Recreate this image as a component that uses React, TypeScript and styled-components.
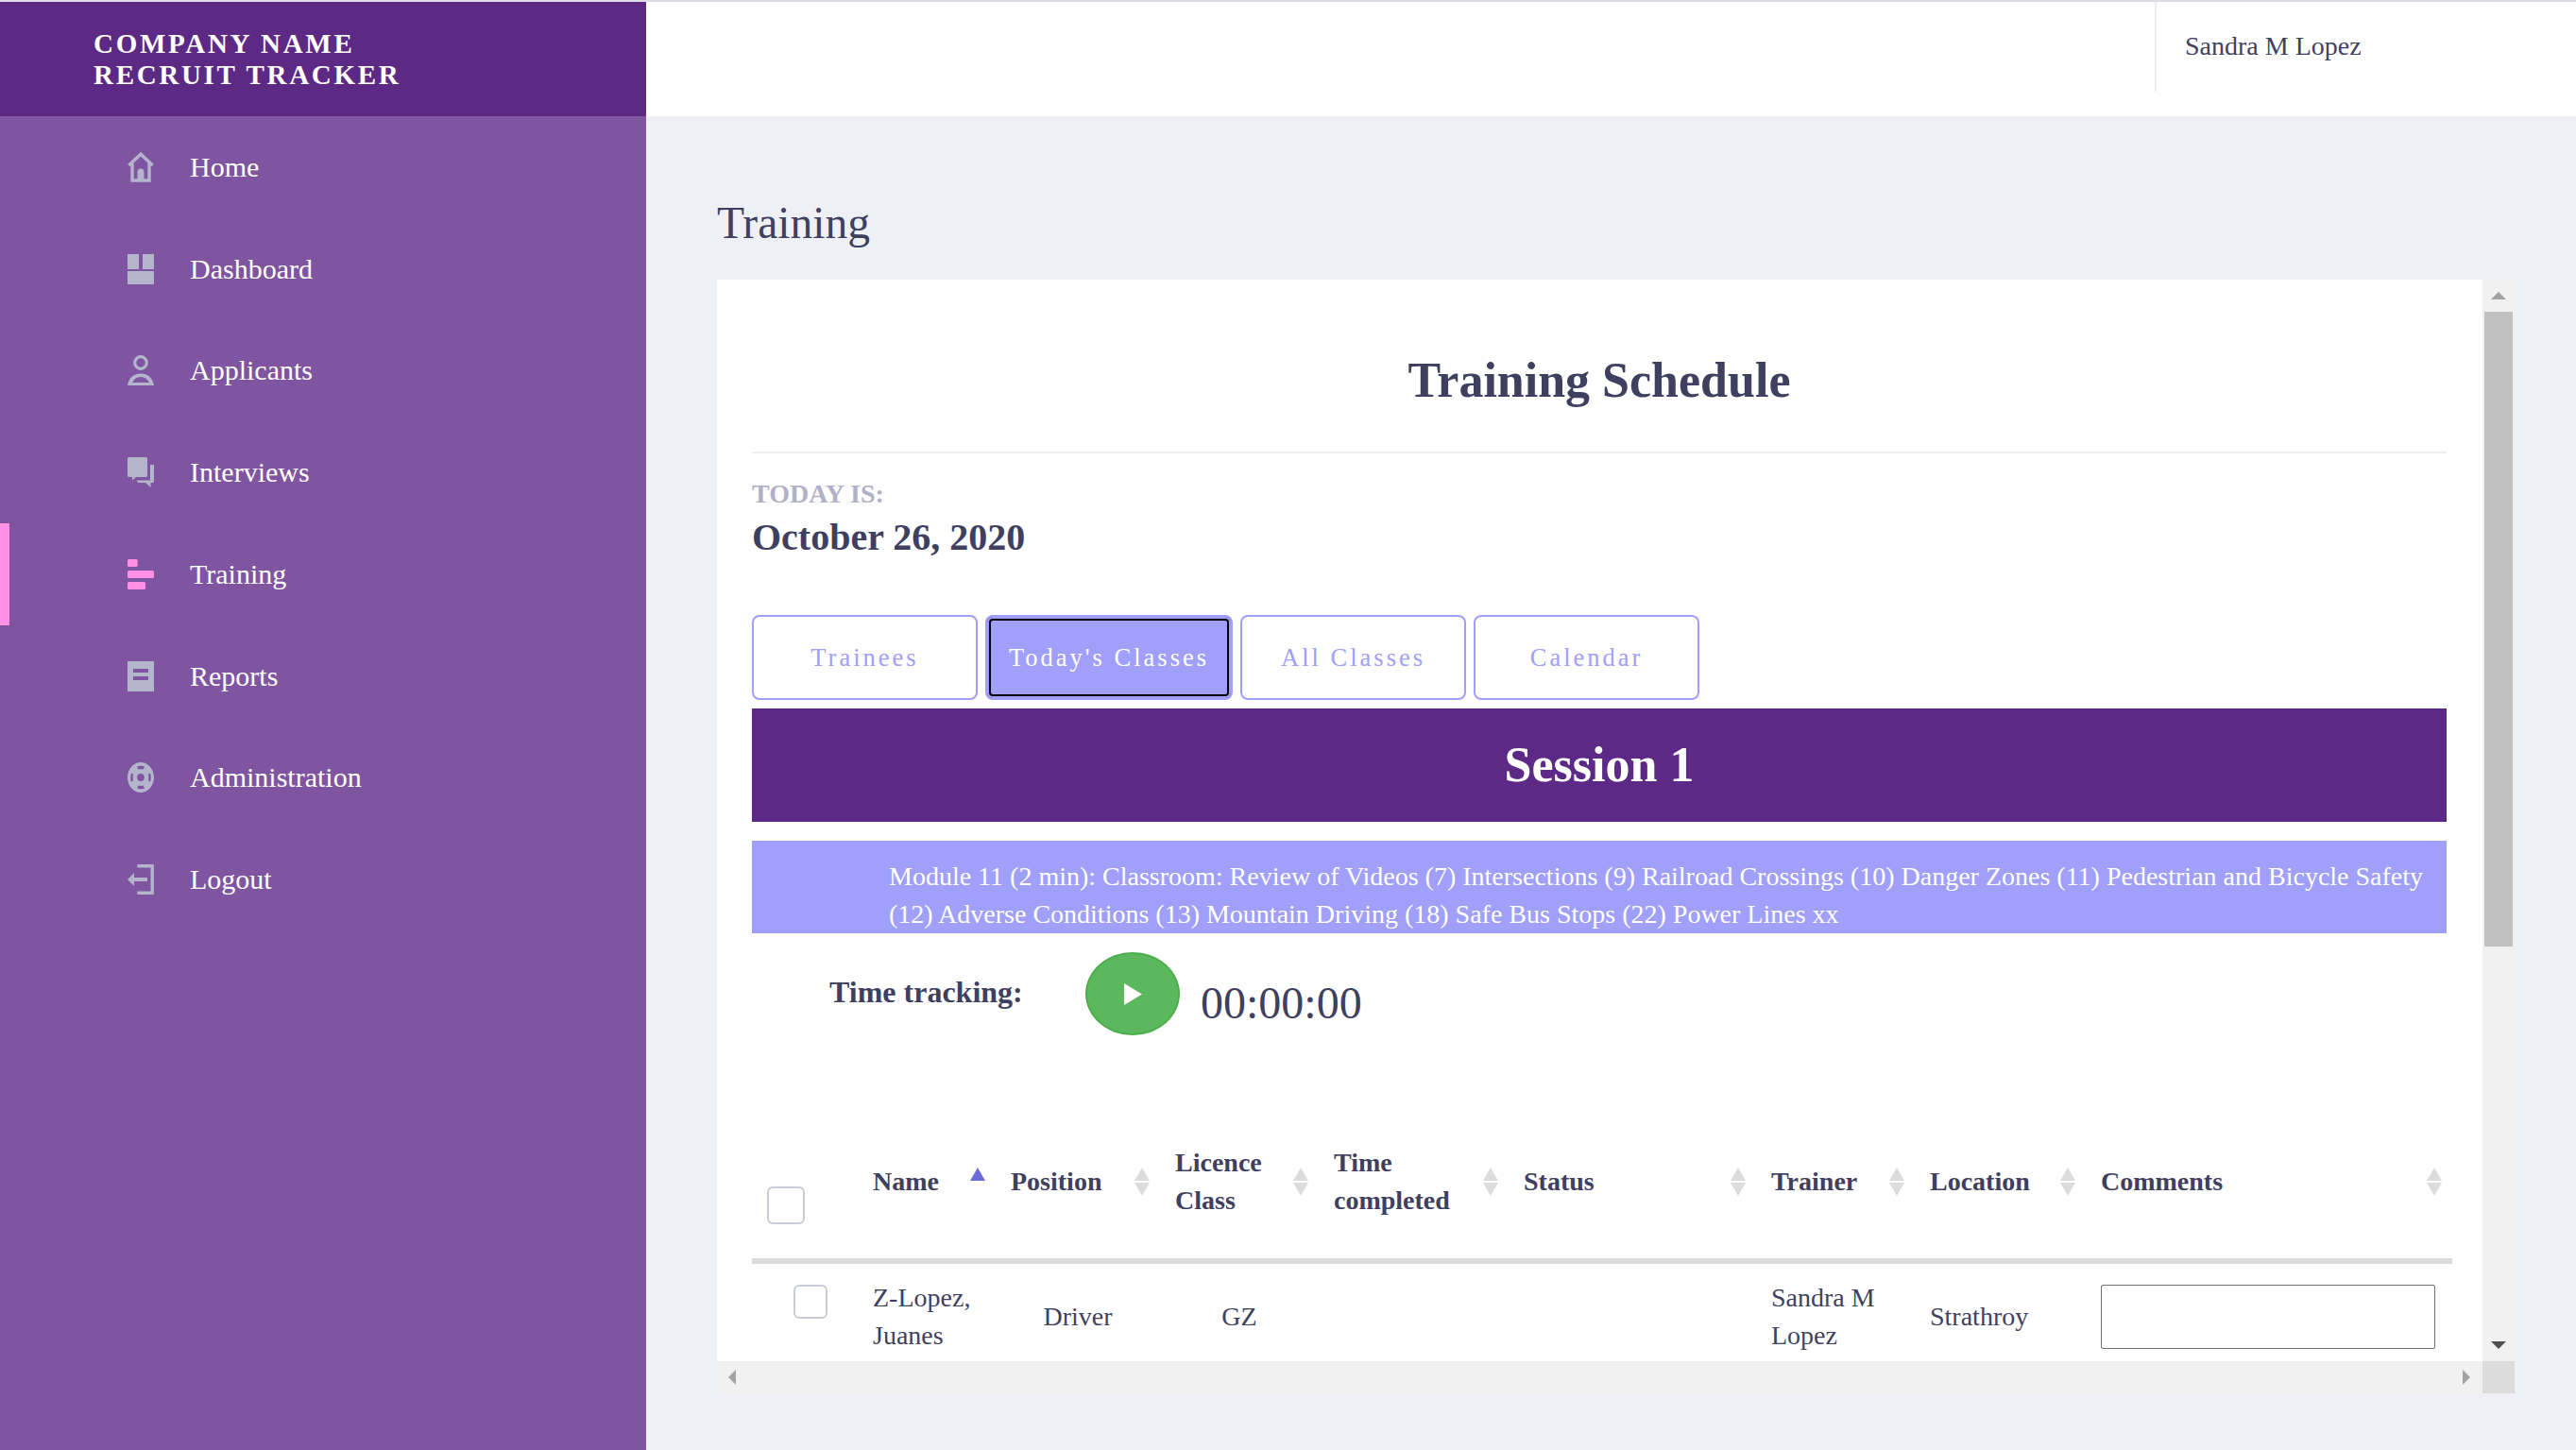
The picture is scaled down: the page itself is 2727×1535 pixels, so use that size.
import React from "react";
import styled, { createGlobalStyle } from "styled-components";

const Global = createGlobalStyle`
  html, body { margin: 0; padding: 0; height: 100%; overflow: hidden; background: #eff0f5; }
  body { font-family: "Liberation Serif", "Times New Roman", serif; color: #3f3f5f; }
  * { box-sizing: border-box; }
`;

const Shell = styled.div`
  display: grid;
  grid-template-columns: 684px 1fr;
  height: 1535px;
  border-top: 2px solid #dcdce4;
`;
const Sidebar = styled.aside`
  background: #7f54a0;
  display: flex;
  flex-direction: column;
`;
const Brand = styled.div`
  height: 121px;
  background: #5c2985;
  color: #fff;
  font-weight: 700;
  font-size: 29px;
  line-height: 33px;
  letter-spacing: 2.7px;
  padding: 28px 0 0 99px;
`;
const Nav = styled.nav`
  display: flex;
  flex-direction: column;
`;
const NavRow = styled.div<{ $active?: boolean }>`
  height: 107.75px;
  display: flex;
  align-items: center;
  gap: 38px;
  padding-left: 125px;
  border-left: 10px solid ${(p) => (p.$active ? "#ff90e8" : "transparent")};
  color: ${(p) => (p.$active ? "#ff90e8" : "#b4b4cc")};
`;
const NavLabel = styled.span`
  color: #fff;
  font-size: 30px;
`;
const NavIcon = styled.svg`
  width: 28px;
  height: 32px;
  flex: none;
  fill: currentColor;
`;
const Main = styled.main`
  display: flex;
  flex-direction: column;
  min-width: 0;
`;
const TopBar = styled.header`
  height: 121px;
  background: #fff;
  display: flex;
  align-items: flex-start;
  padding-left: 1597px;
`;
const UserBox = styled.div`
  height: 95px;
  border-left: 2px solid #eeeef4;
  padding: 29px 0 0 30px;
  font-size: 28px;
  line-height: 36px;
  white-space: nowrap;
`;
const Content = styled.div`
  padding: 83px 65px 0 75px;
`;
const PageTitle = styled.h1`
  margin: 0 0 30px;
  font-size: 47.5px;
  line-height: 60px;
  font-weight: 400;
`;
const Frame = styled.div`
  display: grid;
  grid-template-columns: 1869px 34px;
  grid-template-rows: 1145px 34px;
`;
const Viewport = styled.div`
  background: #fff;
  overflow: hidden;
  padding: 77px 0 0 37px;
`;
const Inner = styled.div`
  width: 1794px;
`;
const Heading = styled.h2`
  margin: 0;
  height: 107px;
  border-bottom: 2px solid #eee;
  text-align: center;
  font-size: 52px;
  line-height: 60px;
  font-weight: 700;
`;
const TodayLabel = styled.div`
  margin-top: 28px;
  font-size: 28px;
  line-height: 30px;
  font-weight: 700;
  color: #b0b0c8;
`;
const DateText = styled.div`
  margin-top: 6px;
  font-size: 40px;
  line-height: 50px;
  font-weight: 700;
`;
const Tabs = styled.div`
  display: flex;
  gap: 8px;
  margin-top: 57px;
`;
const Tab = styled.button<{ $active?: boolean }>`
  min-width: 239px;
  height: 90px;
  padding: 0 23px;
  border: 2px solid #a0a0fa;
  border-radius: 8px;
  font-family: inherit;
  font-size: 26.5px;
  letter-spacing: 3px;
  color: ${(p) => (p.$active ? "#fff" : "#a0a0fa")};
  background: ${(p) => (p.$active ? "#a0a0fa" : "#fff")};
  box-shadow: ${(p) => (p.$active ? "inset 0 0 0 2px #a0a0fa, inset 0 0 0 4px #000" : "none")};
`;
const SessionBar = styled.div`
  margin-top: 9px;
  height: 120px;
  background: #5d2986;
  color: #fff;
  font-size: 52px;
  font-weight: 700;
  line-height: 120px;
  text-align: center;
`;
const ModuleBox = styled.div`
  margin-top: 20px;
  height: 98px;
  padding: 18px 24px 0 145px;
  background: #a0a0fa;
  color: #fff;
  font-size: 28px;
  line-height: 40px;
`;
const TimeRow = styled.div`
  display: flex;
  align-items: center;
  margin-top: 20px;
  padding-left: 82px;
`;
const TimeLabel = styled.div`
  width: 271px;
  padding-bottom: 3px;
  font-size: 32px;
  font-weight: 700;
`;
const PlayButton = styled.button`
  width: 100px;
  height: 88px;
  border: 2px solid #4cae4c;
  border-radius: 50%;
  background: #5cb85c;
  display: flex;
  align-items: center;
  justify-content: center;
  padding: 0;
`;
const Clock = styled.div`
  margin-left: 22px;
  padding-top: 20px;
  font-size: 48px;
  line-height: 50px;
`;
const Table = styled.table`
  margin-top: 74px;
  width: 1800px;
  table-layout: fixed;
  border-collapse: separate;
  border-spacing: 0;
  font-size: 28px;
  line-height: 40px;
`;
const HeadCell = styled.th`
  height: 168px;
  padding: 0 11px 0 16px;
  border-bottom: 6px solid #dcdcdc;
  text-align: left;
  font-weight: 700;
`;
const CheckHead = styled.th`
  height: 168px;
  padding: 50px 0 0 16px;
  border-bottom: 6px solid #dcdcdc;
  text-align: left;
`;
const HeadInner = styled.div`
  display: flex;
  align-items: center;
  justify-content: space-between;
  gap: 8px;
`;
const Check = styled.input<{ $size: number }>`
  appearance: none;
  display: block;
  margin: 0;
  width: ${(p) => p.$size}px;
  height: ${(p) => p.$size}px;
  border: 2px solid #c8ccd8;
  border-radius: 6px;
  background: #fff;
`;
const Cell = styled.td<{ $center?: boolean }>`
  padding: 16px 16px 18px;
  vertical-align: middle;
  font-weight: 400;
  text-align: ${(p) => (p.$center ? "center" : "left")};
`;
const CheckCell = styled.td`
  padding: 22px 0 0 44px;
  vertical-align: top;
`;
const CommentInput = styled.input`
  display: block;
  width: 354px;
  height: 68px;
  border: 1px solid #707070;
  border-radius: 2px;
  background: #fff;
`;
const ScrollV = styled.div`
  background: #f1f1f1;
  display: flex;
  flex-direction: column;
  align-items: center;
`;
const ScrollH = styled.div`
  background: #f1f1f1;
  display: flex;
  align-items: center;
  justify-content: space-between;
  padding: 0 13px 0 12px;
`;
const ArrowCap = styled.div`
  height: 34px;
  flex: none;
  display: flex;
  align-items: center;
  justify-content: center;
`;
const Thumb = styled.div`
  width: 30px;
  height: 672px;
  background: #c1c1c1;
`;
const Spacer = styled.div`
  flex: 1;
`;
const Corner = styled.div`
  background: #dcdcdc;
`;

const SortIcon = ({ active }: { active?: boolean }) => (
  <svg width="16" height="30" viewBox="0 0 16 30" style={{ flex: "none" }}>
    <path d="M8 0 L16 14 H0 Z" fill={active ? "#6b6bd6" : "#dcdcdc"} />
    {!active && <path d="M0 16 H16 L8 30 Z" fill="#dcdcdc" />}
  </svg>
);

const icons: Record<string, React.ReactNode> = {
  Home: (
    <>
      <path d="M1.3 14 L14 2.2 L26.7 14" fill="none" stroke="currentColor" strokeWidth="3.4" />
      <path d="M5 11.5 V30 H23 V11.5" fill="none" stroke="currentColor" strokeWidth="3.4" />
      <path d="M10.5 31 V21 a3.5 3.5 0 0 1 7 0 V31 Z" />
    </>
  ),
  Dashboard: (
    <>
      <rect x="0" y="0" width="12" height="16" />
      <rect x="16" y="0" width="12" height="16" />
      <rect x="0" y="18" width="28" height="14" />
    </>
  ),
  Applicants: (
    <>
      <circle cx="14" cy="8" r="6.3" fill="none" stroke="currentColor" strokeWidth="3.2" />
      <path
        fillRule="evenodd"
        d="M0 32 C1 24 7 19.5 14 19.5 C21 19.5 27 24 28 32 Z M5 29 H23 C21 25 18 23 14 23 C10 23 7 25 5 29 Z"
      />
    </>
  ),
  Interviews: (
    <>
      <path d="M1.5 0 H19.5 A1.5 1.5 0 0 1 21 1.5 V19.5 A1.5 1.5 0 0 1 19.5 21 H9 L5 24.5 V21 H1.5 A1.5 1.5 0 0 1 0 19.5 V1.5 A1.5 1.5 0 0 1 1.5 0 Z" />
      <path d="M24 8 H28 V25.5 A1.5 1.5 0 0 1 26.5 27 H24.5 V32 L19 27 H11 L9.5 24.5 H24 Z" />
    </>
  ),
  Training: (
    <>
      <rect x="0" y="0" width="10.7" height="8" rx="1.5" />
      <rect x="0" y="12" width="28" height="8" rx="1.5" />
      <rect x="0" y="24" width="19" height="8" rx="1.5" />
    </>
  ),
  Reports: (
    <path
      fillRule="evenodd"
      d="M1 0 H27 A1 1 0 0 1 28 1 V32 H0 V1 A1 1 0 0 1 1 0 Z M6 8 V12 H22 V8 Z M6 16 V20 H22 V16 Z"
    />
  ),
  Administration: (
    <>
      <path
        fillRule="evenodd"
        d="M14 0 C21.7 0 28 7.2 28 16 C28 24.8 21.7 32 14 32 C6.3 32 0 24.8 0 16 C0 7.2 6.3 0 14 0 Z
           M14 12 A3.8 4 0 1 0 14 20 A3.8 4 0 1 0 14 12 Z
           M10 4.5 C12 3.5 16 3.5 18 4.5 L16.5 7.5 C15 7 13 7 11.5 7.5 Z
           M10 27.5 C12 28.5 16 28.5 18 27.5 L16.5 24.5 C15 25 13 25 11.5 24.5 Z
           M4 11.5 C3 14 3 18 4 20.5 L6 19.5 C5.6 17.5 5.6 14.5 6 12.5 Z
           M24 11.5 C25 14 25 18 24 20.5 L22 19.5 C22.4 17.5 22.4 14.5 22 12.5 Z"
      />
    </>
  ),
  Logout: (
    <>
      <path d="M10.3 1.7 H26.2 V30.3 H10.3" fill="none" stroke="currentColor" strokeWidth="3.4" />
      <path d="M0 16 L7 9 V14 H21 V18 H7 V23 Z" />
    </>
  ),
};

const navItems = ["Home", "Dashboard", "Applicants", "Interviews", "Training", "Reports", "Administration", "Logout"];
const tabs = ["Trainees", "Today's Classes", "All Classes", "Calendar"];
const columns = [
  { label: "Name", active: true },
  { label: "Position" },
  { label: "Licence Class" },
  { label: "Time completed" },
  { label: "Status" },
  { label: "Trainer" },
  { label: "Location" },
  { label: "Comments" },
];
const colWidths = [112, 146, 174, 168, 201, 262, 168, 181, 388];

export default function App() {
  return (
    <>
      <Global />
      <Shell>
        <Sidebar>
          <Brand>
            COMPANY NAME
            <br />
            RECRUIT TRACKER
          </Brand>
          <Nav>
            {navItems.map((n) => (
              <NavRow key={n} $active={n === "Training"}>
                <NavIcon viewBox="0 0 28 32">{icons[n]}</NavIcon>
                <NavLabel>{n}</NavLabel>
              </NavRow>
            ))}
          </Nav>
        </Sidebar>
        <Main>
          <TopBar>
            <UserBox>Sandra M Lopez</UserBox>
          </TopBar>
          <Content>
            <PageTitle>Training</PageTitle>
            <Frame>
              <Viewport>
                <Inner>
                  <Heading>Training Schedule</Heading>
                  <TodayLabel>TODAY IS:</TodayLabel>
                  <DateText>October 26, 2020</DateText>
                  <Tabs>
                    {tabs.map((t) => (
                      <Tab key={t} $active={t === "Today's Classes"}>
                        {t}
                      </Tab>
                    ))}
                  </Tabs>
                  <SessionBar>Session 1</SessionBar>
                  <ModuleBox>
                    Module 11 (2 min): Classroom: Review of Videos (7) Intersections (9) Railroad Crossings (10) Danger
                    Zones (11) Pedestrian and Bicycle Safety (12) Adverse Conditions (13) Mountain Driving (18) Safe Bus
                    Stops (22) Power Lines xx
                  </ModuleBox>
                  <TimeRow>
                    <TimeLabel>Time tracking:</TimeLabel>
                    <PlayButton aria-label="Start">
                      <svg width="19" height="23" viewBox="0 0 19 23">
                        <path d="M0 0 L19 11.5 L0 23 Z" fill="#fff" />
                      </svg>
                    </PlayButton>
                    <Clock>00:00:00</Clock>
                  </TimeRow>
                  <Table>
                    <colgroup>
                      {colWidths.map((w, i) => (
                        <col key={i} width={w} />
                      ))}
                    </colgroup>
                    <thead>
                      <tr>
                        <CheckHead>
                          <Check type="checkbox" $size={40} />
                        </CheckHead>
                        {columns.map((c) => (
                          <HeadCell key={c.label}>
                            <HeadInner>
                              <span>{c.label}</span>
                              <SortIcon active={c.active} />
                            </HeadInner>
                          </HeadCell>
                        ))}
                      </tr>
                    </thead>
                    <tbody>
                      <tr>
                        <CheckCell>
                          <Check type="checkbox" $size={36} />
                        </CheckCell>
                        <Cell>Z-Lopez, Juanes</Cell>
                        <Cell $center>Driver</Cell>
                        <Cell $center>GZ</Cell>
                        <Cell />
                        <Cell />
                        <Cell>Sandra M Lopez</Cell>
                        <Cell>Strathroy</Cell>
                        <Cell>
                          <CommentInput type="text" />
                        </Cell>
                      </tr>
                    </tbody>
                  </Table>
                </Inner>
              </Viewport>
              <ScrollV>
                <ArrowCap>
                  <svg width="16" height="8" viewBox="0 0 16 8">
                    <path d="M8 0 L16 8 H0 Z" fill="#a3a3a3" />
                  </svg>
                </ArrowCap>
                <Thumb />
                <Spacer />
                <ArrowCap>
                  <svg width="16" height="8" viewBox="0 0 16 8">
                    <path d="M0 0 H16 L8 8 Z" fill="#505050" />
                  </svg>
                </ArrowCap>
              </ScrollV>
              <ScrollH>
                <svg width="8" height="16" viewBox="0 0 8 16">
                  <path d="M8 0 V16 L0 8 Z" fill="#a3a3a3" />
                </svg>
                <svg width="8" height="16" viewBox="0 0 8 16">
                  <path d="M0 0 L8 8 L0 16 Z" fill="#a3a3a3" />
                </svg>
              </ScrollH>
              <Corner />
            </Frame>
          </Content>
        </Main>
      </Shell>
    </>
  );
}
